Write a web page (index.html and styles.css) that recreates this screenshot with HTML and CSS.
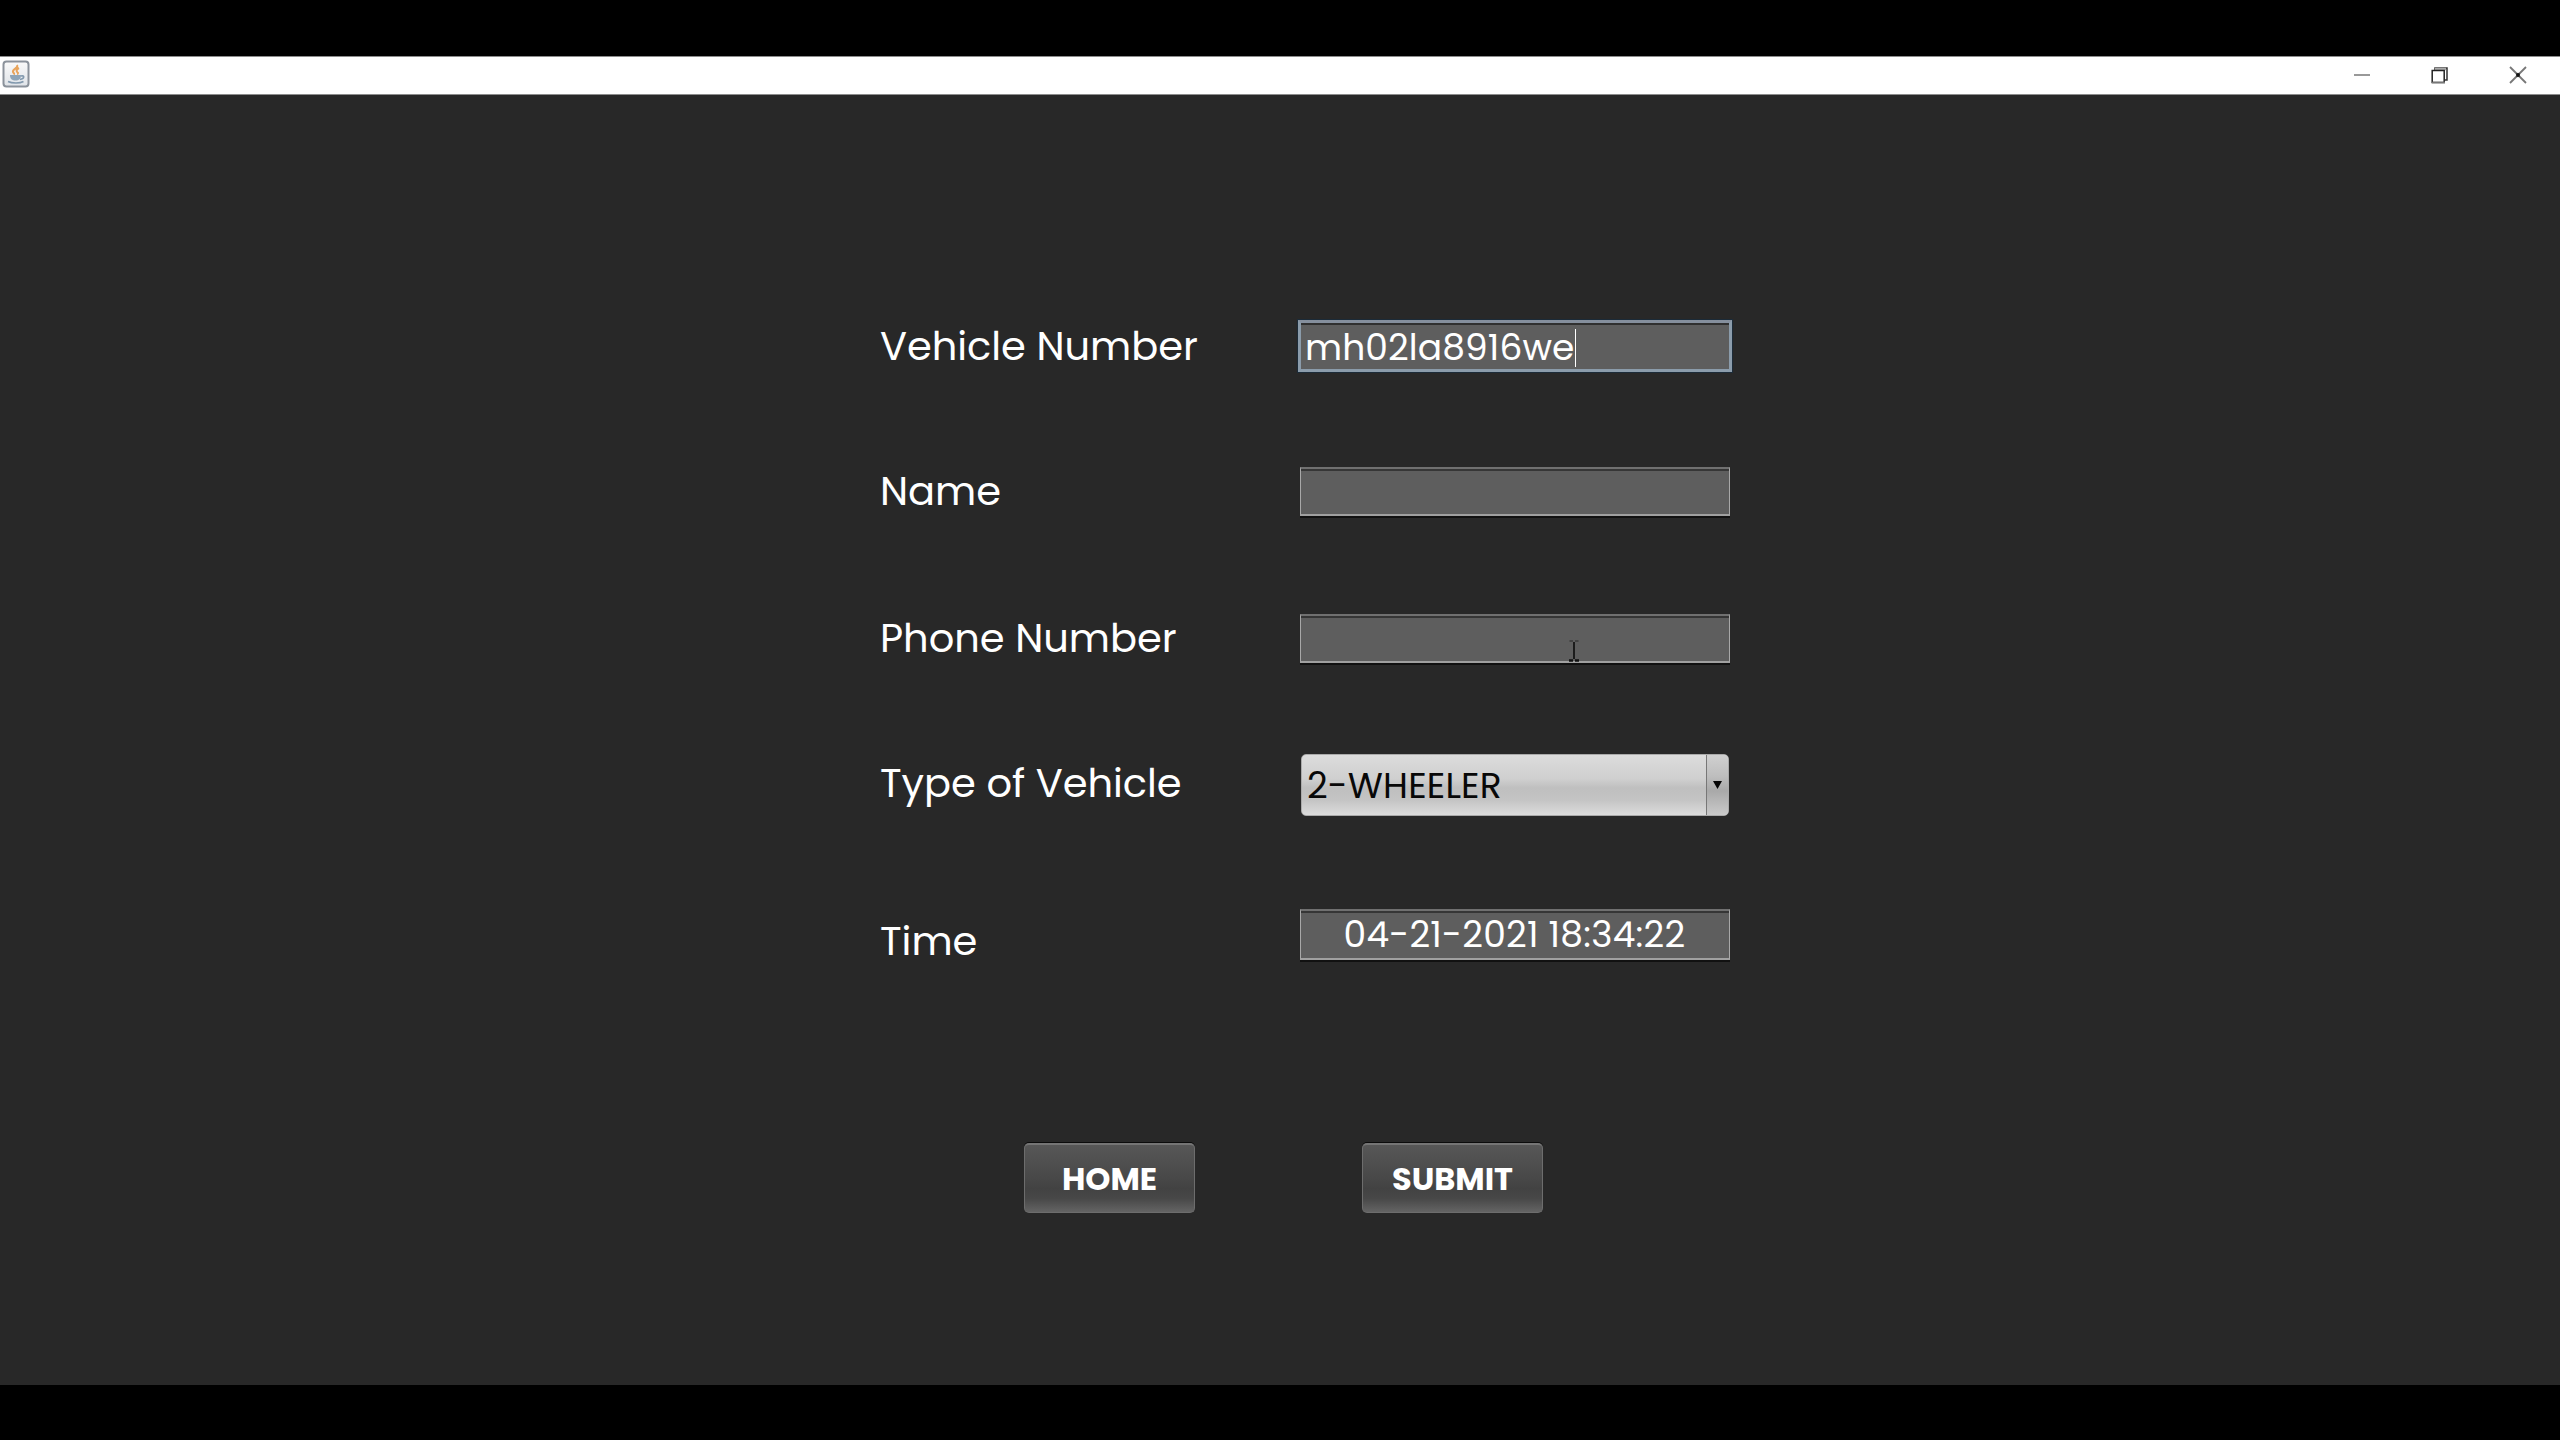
FILE: index.html
```
<!DOCTYPE html>
<html lang="en">
<head>
<meta charset="utf-8">
<title>Vehicle Entry</title>
<link rel="stylesheet" href="styles.css">
</head>
<body>
<div class="window">
  <header class="titlebar">
    <svg class="app-icon" width="28" height="28" viewBox="0 0 28 28">
      <defs><linearGradient id="tile" x1="0" y1="0" x2="0" y2="1"><stop offset="0" stop-color="#fafafa"/><stop offset="1" stop-color="#dfe3e8"/></linearGradient></defs>
      <rect x="1.500" y="1.500" width="25" height="25" rx="3" fill="url(#tile)" stroke="#8b929b" stroke-width="2"/>
      <path d="M15 5c2 3-5 4-4 7 .5 1 1 2 2 2M17 8c-4 2-2 4-1 5 0 1-1 1-1 1" fill="none" stroke="#e8a45c" stroke-width="2"/>
      <path d="M8 15h11c0 4-2 5.500-5.500 5.500S8 19 8 15z" fill="#8fa5b8"/>
      <path d="M19 16c4-1 3.500 3-1 3.500M6 21.500c4 2 12 2 15.500 0" fill="none" stroke="#8299ae" stroke-width="1.600"/>
    </svg>
    <div class="window-controls">
      <svg width="20" height="20" viewBox="0 0 20 20"><path d="M2 10h16" stroke="#999" stroke-width="2"/></svg>
      <svg width="20" height="20" viewBox="0 0 20 20"><path d="M5 5V3h12v12h-2" fill="none" stroke="#333" stroke-width="1.500"/><path d="M5 4h11" stroke="#aaa" stroke-width="2.500"/><path d="M2.200 5.500h12v12H2.200z" fill="#fff" stroke="#222" stroke-width="1.500"/><path d="M2 17.500h13" stroke="#777" stroke-width="1.500"/></svg>
      <svg width="20" height="20" viewBox="0 0 20 20"><path d="M2 2l16 16M18 2L2 18" stroke="#777" stroke-width="1.800"/><path d="M8.500 8.500l3 3m0-3l-3 3" stroke="#111" stroke-width="1.800"/></svg>
    </div>
  </header>
  <main class="content">
    <div class="row">
      <div class="label">Vehicle Number</div>
      <div class="field focused"><span>mh02la8916we</span><i class="caret"></i></div>
    </div>
    <div class="row">
      <div class="label">Name</div>
      <div class="field"></div>
    </div>
    <div class="row">
      <div class="label">Phone Number</div>
      <div class="field">
        <svg class="pointer" width="10" height="22" viewBox="0 0 10 22"><path d="M.5 1h3.500M6 1h3.500" stroke="#3a3a3a" stroke-width="1.500"/><path d="M5 2v17" stroke="#1c1c1c" stroke-width="2"/><path d="M0 20.500h4M6 20.500h4" stroke="#111" stroke-width="2.500"/></svg>
      </div>
    </div>
    <div class="row">
      <div class="label type">Type of Vehicle</div>
      <div class="select">
        <span class="select-value">2-WHEELER</span>
        <span class="select-arrow"><svg width="9" height="8" viewBox="0 0 9 8"><path d="M0 0h9L4.500 8z" fill="#050505"/></svg></span>
      </div>
    </div>
    <div class="row">
      <div class="label time">Time</div>
      <div class="field timestamp"><span>04-21-2021 18:34:22</span></div>
    </div>
    <div class="actions">
      <div class="button home">HOME</div>
      <div class="button submit">SUBMIT</div>
    </div>
  </main>
</div>
</body>
</html>
```
FILE: styles.css
```
* { box-sizing: border-box; }
body {
  margin: 0;
  height: 1440px;
  padding-top: 56px;
  overflow: hidden;
  background: #000;
  font-family: Poppins, Inter, sans-serif;
}
.window { height: 1329px; background: #282828; }
.titlebar {
  height: 39px;
  display: flex;
  align-items: center;
  justify-content: space-between;
  padding: 0 32px 2px 2px;
  background: #fff;
  border-top: 1px solid #8c8c8c;
  border-bottom: 1px solid #8c8c8c;
}
.app-icon { display: block; margin-top: -2px; }
.window-controls { display: flex; gap: 58px; }
.window-controls svg { display: block; }
.content { padding: 178px 0 0 880px; }
.row {
  display: grid;
  grid-template-columns: 420px 430px;
  height: 146px;
  align-items: center;
  color: #fff;
}
.row:nth-child(1) { height: 145px; }
.row:nth-child(3) { height: 148px; }
.row:nth-child(5) { height: 152px; }
.label {
  font-size: 40px;
  line-height: 48px;
  letter-spacing: -.05px;
  white-space: nowrap;
}
.type { padding-bottom: 5px; }
.time { padding-top: 13px; }
.field {
  position: relative;
  display: flex;
  align-items: center;
  height: 49px;
  padding-left: 5px;
  border: 1px solid #a8a8a8;
  border-top: 2px solid #707070;
  border-bottom: 2px solid #a0a0a0;
  background: #5e5e5e;
  box-shadow: inset 0 2px #363636, 0 2px #111;
  font-size: 36px;
  line-height: 44px;
  white-space: nowrap;
}
.focused {
  height: 52px;
  margin: 1px -2px 0;
  padding: 3px 0 0 4px;
  border: 3px solid #8b9cab;
  border-top-color: #858f9d;
  box-shadow: inset 0 2px #303030, 0 0 0 1px #1c2b38;
  letter-spacing: .1px;
}
.caret { width: 1px; height: 38px; margin-left: 1px; background: #fff; }
.pointer { position: absolute; left: 268px; top: 24px; }
.timestamp {
  height: 51px;
  justify-content: center;
  padding: 1px 1px 0 0;
  letter-spacing: .25px;
}
.select {
  display: flex;
  height: 62px;
  margin: 0 1px;
  overflow: hidden;
  border: 1px solid #aaa;
  border-radius: 5px;
  background: linear-gradient(#dcdcdc 0%, #cfcfcf 40%, #bfbfbf 55%, #c4c4c4 75%, #dcdcdc 100%);
  color: #080808;
  font-size: 36px;
}
.select-value {
  flex: 1;
  padding-left: 5px;
  line-height: 62px;
  letter-spacing: .15px;
}
.select-arrow {
  display: flex;
  align-items: center;
  justify-content: center;
  width: 22px;
  border-left: 1px solid #777;
  background: linear-gradient(#d0d0d0, #bebebe 35%, #a9a9a9 60%, #cacaca);
}
.actions { display: flex; gap: 167px; padding: 133px 0 0 144px; }
.button {
  height: 70px;
  border: 1px solid #6d6d6d;
  border-top: 2px solid #757575;
  border-radius: 5px;
  background: linear-gradient(#575757, #484848 50%, #424242 65%, #484848 80%, #646464);
  box-shadow: 0 -1px #0c0c0c;
  color: #fff;
  font-size: 32px;
  font-weight: 700;
  line-height: 67px;
  text-align: center;
}
.home { width: 171px; }
.submit { width: 181px; }
```
